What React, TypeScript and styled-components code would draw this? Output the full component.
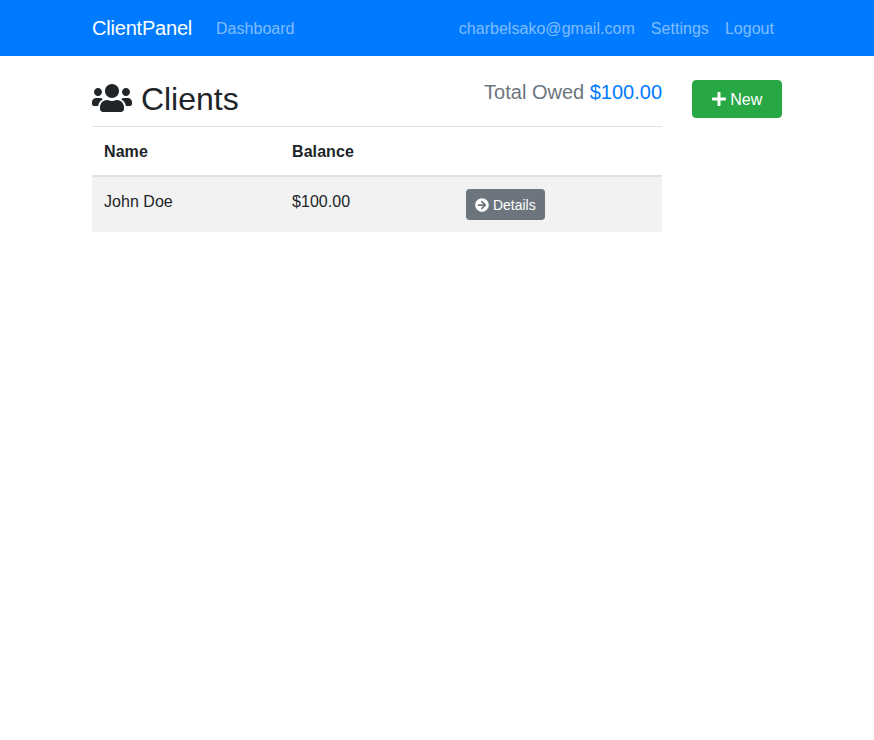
import React from "react";
import styled, { createGlobalStyle } from "styled-components";
import { FaArrowCircleRight, FaPlus, FaUsers } from "react-icons/fa";

const GlobalStyle = createGlobalStyle`
  *, *::before, *::after { box-sizing: border-box; }
  body {
    margin: 0;
    background: #fff;
    color: #212529;
    font: 400 16px/1.5 "Liberation Sans", Arial, sans-serif;
  }
`;

const Navbar = styled.nav`
  background: #007bff;
  height: 56px;
  margin-bottom: 24px;
`;

const Container = styled.div`
  width: 720px;
  margin: 0 auto;
  padding: 0 15px;
`;

const NavContent = styled(Container)`
  height: 100%;
  display: flex;
  align-items: center;
`;

const Brand = styled.a`
  width: 100px;
  color: #fff;
  font-size: 20px;
  line-height: 30px;
  letter-spacing: -0.2px;
  margin-right: 16px;
`;

const NavList = styled.ul<{ $end?: boolean }>`
  display: flex;
  list-style: none;
  margin: 0;
  margin-left: ${(p) => (p.$end ? "auto" : "0")};
  padding: 0;
`;

const NavLink = styled.a`
  display: block;
  padding: 9px 8px 7px;
  letter-spacing: 0.03px;
  color: rgba(255, 255, 255, 0.5);
`;

const Columns = styled(Container)`
  display: grid;
  grid-template-columns: 570px 90px;
  column-gap: 30px;
  align-items: start;
`;

const Header = styled.header`
  display: flex;
  justify-content: space-between;
  align-items: flex-start;
  height: 46px;
`;

const Title = styled.h2`
  margin: 0;
  font-size: 32px;
  font-weight: 400;
  line-height: 38.4px;
`;

const Icon = styled.span<{ $width: string }>`
  display: inline-block;
  width: ${(p) => p.$width};
  height: 1em;
  line-height: 1;
  vertical-align: -0.125em;

  svg {
    display: block;
    width: 100%;
    height: 100%;
  }
`;

const Total = styled.h5`
  margin: 0;
  font-size: 20px;
  font-weight: 400;
  line-height: 24px;
  color: #6c757d;
`;

const Amount = styled.span`
  color: #007bff;
`;

const Table = styled.table`
  width: 100%;
  table-layout: fixed;
  border-collapse: collapse;
`;

const HeadCell = styled.th<{ $width: number }>`
  width: ${(p) => p.$width}px;
  padding: 13px 12px 11px;
  text-align: left;
  vertical-align: bottom;
  letter-spacing: 0.08px;
  border-top: 1px solid #dee2e6;
  border-bottom: 2px solid #dee2e6;
`;

const Row = styled.tr`
  background: rgba(0, 0, 0, 0.05);
`;

const Cell = styled.td`
  padding: 13px 12px 11px;
  vertical-align: top;
  letter-spacing: 0.04px;
  border-top: 1px solid #dee2e6;
`;

const ActionCell = styled(Cell)`
  padding: 12px;
  letter-spacing: normal;
`;

const Button = styled.button`
  width: 100%;
  margin: 0;
  padding: 7px 12px 5px;
  border: 1px solid #28a745;
  border-radius: 4px;
  background: #28a745;
  color: #fff;
  font: inherit;
  letter-spacing: 0.05px;
  white-space: nowrap;
`;

const SmallButton = styled(Button)`
  width: auto;
  padding: 5px 8px 3px;
  border-color: #6c757d;
  border-radius: 3.2px;
  background: #6c757d;
  font-size: 14px;
  letter-spacing: normal;
  vertical-align: middle;
`;

const clients = [{ name: "John Doe", balance: "$100.00" }];

export default function App() {
  return (
    <>
      <GlobalStyle />
      <Navbar>
        <NavContent>
          <Brand>ClientPanel</Brand>
          <NavList>
            <li><NavLink>Dashboard</NavLink></li>
          </NavList>
          <NavList $end>
            <li><NavLink>charbelsako@gmail.com</NavLink></li>
            <li><NavLink>Settings</NavLink></li>
            <li><NavLink>Logout</NavLink></li>
          </NavList>
        </NavContent>
      </Navbar>
      <Columns as="main">
        <section>
          <Header>
            <Title>
              <Icon $width="1.25em"><FaUsers /></Icon> Clients
            </Title>
            <Total>
              Total Owed <Amount>$100.00</Amount>
            </Total>
          </Header>
          <Table>
            <thead>
              <tr>
                <HeadCell $width={188}>Name</HeadCell>
                <HeadCell $width={174}>Balance</HeadCell>
                <HeadCell $width={208} />
              </tr>
            </thead>
            <tbody>
              {clients.map((client) => (
                <Row key={client.name}>
                  <Cell>{client.name}</Cell>
                  <Cell>{client.balance}</Cell>
                  <ActionCell>
                    <SmallButton>
                      <Icon $width="1em"><FaArrowCircleRight /></Icon> Details
                    </SmallButton>
                  </ActionCell>
                </Row>
              ))}
            </tbody>
          </Table>
        </section>
        <Button>
          <Icon $width="0.875em"><FaPlus /></Icon> New
        </Button>
      </Columns>
    </>
  );
}
